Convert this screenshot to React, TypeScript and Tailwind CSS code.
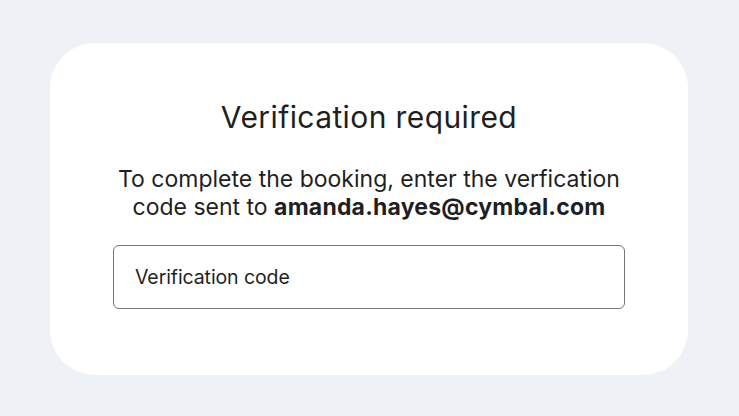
export default function App() {
  return (
    <div className="w-[739px] h-[416px] bg-[#eef2f7] pt-[43px] pl-[50px]" style={{ fontFamily: 'Inter, sans-serif' }}>
      <div className="w-[638px] h-[332px] bg-white rounded-[45px] flex flex-col items-center pt-[56px]">
        <h1 className="text-[30px] leading-[36px] tracking-[0.4px] text-[#1f1f1f] font-normal">Verification required</h1>
        <p className="mt-[30px] text-[23px] leading-[28px] text-[#1f1f1f] text-center">
          To complete the booking, enter the verfication
          <br />
          code sent to <span className="font-bold tracking-[0.2px]">amanda.hayes@cymbal.com</span>
        </p>
        <div className="mt-[24px] w-[512px] h-[64px] border border-[#747775] rounded-[6px] flex items-center px-[21px] pt-[2px]">
          <span className="text-[19.5px] text-[#1f1f1f] tracking-[-0.1px]">Verification code</span>
        </div>
      </div>
    </div>
  );
}
